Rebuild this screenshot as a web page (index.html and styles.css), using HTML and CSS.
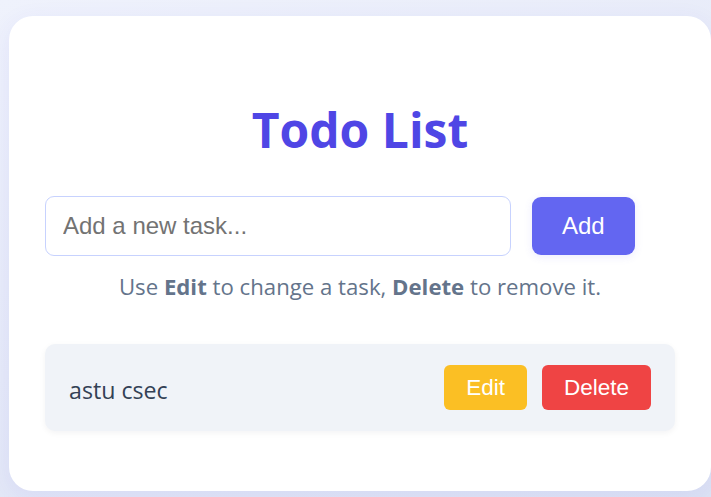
FILE: index.html
```html
<!DOCTYPE html>
<html lang="en">
<head>
<meta charset="utf-8">
<title>Todo List</title>
<link rel="stylesheet" href="styles.css">
</head>
<body>
  <main class="card">
    <h1 class="title">Todo List</h1>
    <form class="add-row" onsubmit="return false;">
      <input class="task-input" type="text" placeholder="Add a new task...">
      <button class="btn btn-add" type="submit">Add</button>
    </form>
    <p class="hint">Use <strong>Edit</strong> to change a task, <strong>Delete</strong> to remove it.</p>
    <ul class="todo-list">
      <li class="todo-item">
        <span class="todo-text">astu csec</span>
        <div class="todo-actions">
          <button class="btn btn-edit" type="button">Edit</button>
          <button class="btn btn-delete" type="button">Delete</button>
        </div>
      </li>
    </ul>
  </main>
</body>
</html>
```

FILE: styles.css
```css
html, body {
  margin: 0;
  height: 100%;
}

body {
  overflow: hidden;
  padding: 16px 0 0 9px;
  box-sizing: border-box;
  background: linear-gradient(160deg, #eff2fc 0%, #e6eaf8 50%, #dde3f4 100%);
  font-family: "Open Sans", "Noto Sans", sans-serif;
}

.card {
  width: 702px;
  box-sizing: border-box;
  background: #ffffff;
  border-radius: 24px;
  padding: 36px 36px 60px;
  box-shadow: 0 6px 24px rgba(79, 70, 229, 0.08);
}

.title {
  margin: 45px 0 34px;
  text-align: center;
  font-size: 48px;
  font-weight: 700;
  line-height: normal;
  color: #4f46e5;
}

.add-row {
  display: flex;
  align-items: center;
  gap: 21px;
  margin: 0;
}

.task-input {
  width: 466px;
  height: 60px;
  box-sizing: border-box;
  border: 1px solid #c7d2fe;
  border-radius: 9px;
  padding: 0 17px;
  font-family: "Liberation Sans", Arial, sans-serif;
  font-size: 24px;
  color: #1f2937;
  outline: none;
}

.task-input::placeholder {
  color: #737373;
}

.btn {
  border: none;
  color: #ffffff;
  font-family: "Liberation Sans", Arial, sans-serif;
  line-height: normal;
  cursor: pointer;
}

.btn-add {
  background: #6366f1;
  font-size: 24px;
  padding: 15px 30px;
  border-radius: 9px;
  box-shadow: 0 2px 8px rgba(99, 102, 241, 0.12);
}

.hint {
  margin: 15px 0 0;
  text-align: center;
  font-size: 22.2px;
  color: #64748b;
}

.hint strong {
  font-weight: 700;
}

.todo-list {
  list-style: none;
  margin: 42px 0 0;
  padding: 0;
}

.todo-item {
  display: flex;
  align-items: center;
  justify-content: space-between;
  height: 87px;
  box-sizing: border-box;
  padding: 0 24px;
  background: #f0f3f8;
  border-radius: 10px;
  box-shadow: 0 2px 6px rgba(15, 23, 42, 0.05);
}

.todo-text {
  font-size: 23.2px;
  color: #334155;
  position: relative;
  top: 2px;
}

.todo-actions {
  display: flex;
  gap: 15px;
}

.btn-edit,
.btn-delete {
  font-size: 22.5px;
  padding: 9.5px 22px;
  border-radius: 6px;
}

.btn-edit {
  background: #fbbf24;
}

.btn-delete {
  background: #ef4444;
}
```
